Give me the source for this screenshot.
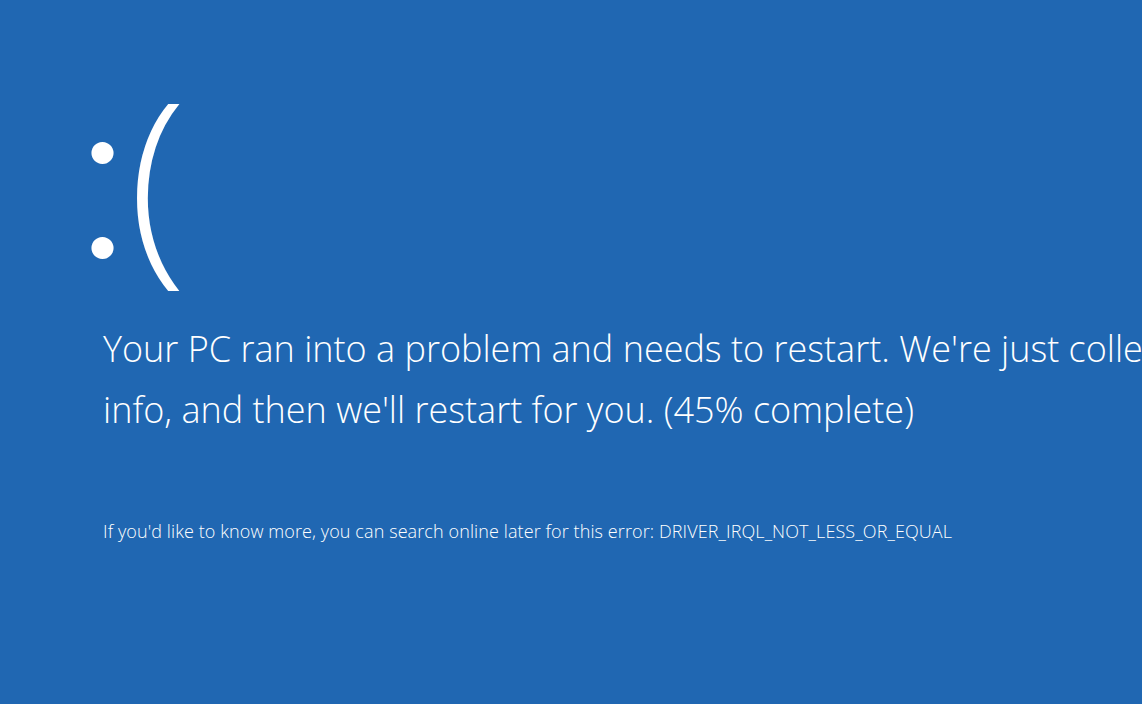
import React from 'react'

const font = { fontFamily: '"Open Sans", "Noto Sans", sans-serif' }
const dots = { fontFamily: 'Lato, "Open Sans", sans-serif' }

export default function App(): JSX.Element {
    return (
        <div className="w-[1142px] h-[704px] overflow-hidden bg-[#2067b2] text-white" style={font}>
            <div className="pt-[35px] w-[1800px]">
                <div className="pl-[74px] text-[214px] leading-[260px] h-[260px] whitespace-nowrap">
                    <span className="font-light text-[238px]" style={dots}>:</span>
                    <span className="font-light -ml-[3px]">(</span>
                </div>
                <div className="pl-[103px] mt-[23px] text-[36px] leading-[61px] font-light whitespace-nowrap">
                    <div>Your PC ran into a problem and needs to restart. We're just collecting some error</div>
                    <div>info, and then we'll restart for you. (45% complete)</div>
                </div>
                <div className="pl-[103px] mt-[79px] text-[18px] leading-[24px] font-light whitespace-nowrap tracking-[0.1px]">
                    If you'd like to know more, you can search online later for this error: DRIVER_IRQL_NOT_LESS_OR_EQUAL
                </div>
            </div>
        </div>
    )
}
